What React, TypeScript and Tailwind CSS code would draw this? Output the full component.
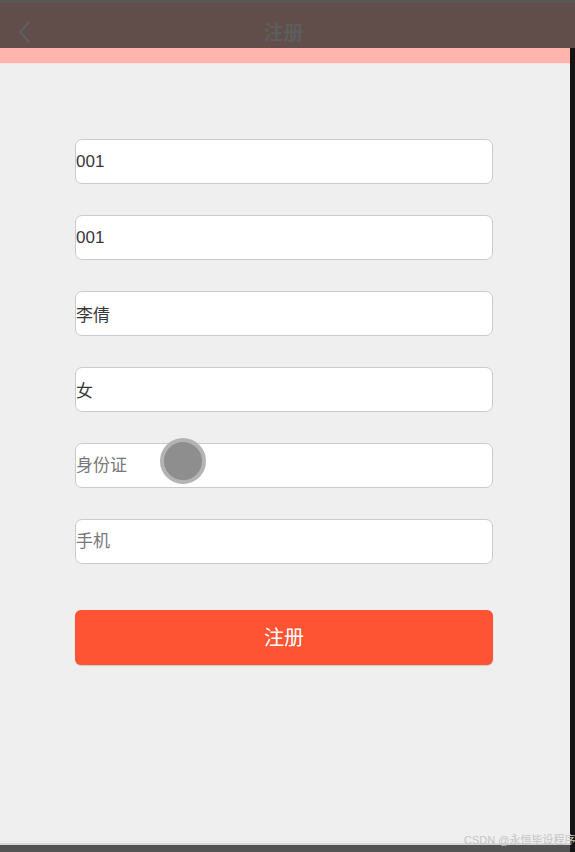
import React from "react";

const fields = [
  { value: "001", placeholder: "" },
  { value: "001", placeholder: "" },
  { value: "李倩", placeholder: "" },
  { value: "女", placeholder: "" },
  { value: "", placeholder: "身份证" },
  { value: "", placeholder: "手机" },
];

const App = () => {
  return (
    <div
      className="w-[575px] h-[852px] flex flex-col overflow-hidden bg-[#efefef]"
      style={{ fontFamily: '"Liberation Sans", "Noto Sans CJK SC", sans-serif' }}
    >
      {/* Header */}
      <div className="h-[3px] bg-[#5a5757]" />
      <header className="relative h-[45px] bg-[#614d4a] flex items-center justify-center">
        <svg
          className="absolute left-[15px] top-[16px]"
          width="20"
          height="26"
          viewBox="0 0 20 26"
          fill="none"
        >
          <path d="M14 3 L5 13 L14 23" stroke="#5e5e5e" strokeWidth="2.2" strokeLinecap="round" strokeLinejoin="round" />
        </svg>
        <h1 className="text-[20px] font-bold text-[#5d5d5d] mt-[14px] mr-[8px]">注册</h1>
      </header>

      <div className="flex flex-1">
        <div className="relative w-[570px] flex flex-col">
          <div className="h-[15px] bg-[#ffb4ae]" />
          <div className="h-px bg-[#f7e4e2]" />

          {/* Form */}
          <main className="relative flex-1 flex flex-col pt-[75px] pl-[75px]">
            <div className="flex flex-col gap-[31px] w-[418px]">
              {fields.map((f, i) => (
                <input
                  key={i}
                  readOnly
                  value={f.value}
                  placeholder={f.placeholder}
                  className="h-[45px] w-full bg-white border border-[#cbcbcb] rounded-[7px] px-0 text-[17px] text-[#383838] placeholder:text-[#777] outline-none"
                />
              ))}
            </div>
            <button className="mt-[46px] w-[418px] h-[55px] rounded-[6px] bg-[#fe5433] text-white text-[20px] shadow-[0_1px_1px_rgba(0,0,0,0.15)]">
              注册
            </button>

            {/* touch indicator */}
            <div className="absolute left-[160px] top-[374px] w-[46px] h-[46px] rounded-full bg-[#8e8e8e] border-[4px] border-[#b3b3b3]" />
          </main>

          <div className="h-[2px] bg-[#d6d6d6]" />
          <div className="h-[7px] bg-[#545454]" />

          <span className="absolute left-[464px] bottom-[4px] text-[11px] text-[#c4c4c4] whitespace-nowrap">
            CSDN @永恒毕设程序
          </span>
        </div>
        <div className="w-[5px] bg-[#141414]" />
      </div>
    </div>
  );
};

export default App;
